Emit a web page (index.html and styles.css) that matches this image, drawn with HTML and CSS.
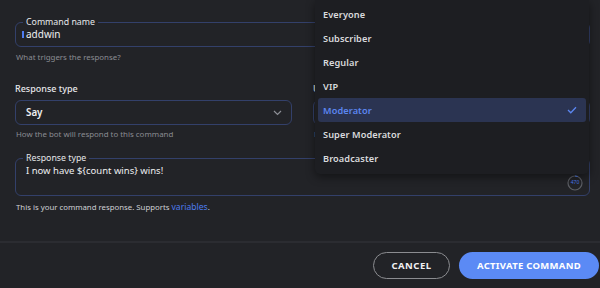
FILE: index.html
```html
<!DOCTYPE html>
<html lang="en">
<head>
    <meta charset="UTF-8">
    <title>Edit command</title>
    <link rel="stylesheet" href="styles.css">
</head>
<body>
    <section class="page">
        <form class="form">
            <fieldset class="outlined name-field">
                <legend>Command name</legend>
                <div class="value"><span class="caret"></span>addwin</div>
            </fieldset>
            <p class="hint">What triggers the response?</p>

            <div class="row">
                <div class="col">
                    <label class="label">Response type</label>
                    <div class="select">
                        <span>Say</span>
                        <svg class="chevron" width="9" height="6" viewBox="0 0 9 6"><path d="M1 1l3.5 3.5L8 1" fill="none" stroke="#8d8f96" stroke-width="1.2"/></svg>
                    </div>
                    <p class="hint">How the bot will respond to this command</p>
                </div>
                <div class="col">
                    <label class="label">User level</label>
                    <div class="select">
                        <span>Moderator</span>
                    </div>
                    <p class="hint">Minimum role needed to use this command</p>
                </div>
            </div>

            <fieldset class="outlined response-field">
                <legend>Response type</legend>
                <div class="ta-body">
                    <div class="value">I now have ${count wins} wins!</div>
                    <div class="counter">
                        <svg width="16" height="16" viewBox="0 0 16 16">
                            <circle cx="8" cy="8" r="7" fill="none" stroke="#5c5e64" stroke-width="1.2"/>
                            <path d="M8 1a7 7 0 0 1 2.6 0.5" fill="none" stroke="#4d7cf0" stroke-width="1.2"/>
                        </svg>
                        <span>470</span>
                    </div>
                </div>
            </fieldset>
            <p class="hint strong">This is your command response. Supports <a href="#" class="link">variables</a>.</p>
        </form>

        <div class="footer">
            <button type="button" class="btn cancel">CANCEL</button>
            <button type="button" class="btn activate">ACTIVATE COMMAND</button>
        </div>

        <ul class="menu">
            <li>Everyone</li>
            <li>Subscriber</li>
            <li>Regular</li>
            <li>VIP</li>
            <li class="selected">Moderator
                <svg width="10" height="8" viewBox="0 0 10 8"><path d="M1 4l2.8 2.8L9 1.2" fill="none" stroke="#5b86f0" stroke-width="1.3"/></svg>
            </li>
            <li>Super Moderator</li>
            <li>Broadcaster</li>
        </ul>
    </section>
</body>
</html>
```

FILE: styles.css
```css
*{
    box-sizing: border-box;
}

body{
    margin: 0;
    background-color: #222327;
    font-family: "Noto Sans", sans-serif;
    color: #e3e4e7;
    overflow: hidden;
}

.page{
    position: relative;
    width: 600px;
    height: 288px;
    display: flex;
    flex-direction: column;
}

.form{
    flex: 1;
    padding: 17px 10px 0 15px;
    margin: 0;
}

.outlined{
    margin: 0;
    border: 1px solid #33406a;
    border-radius: 6px;
    padding: 0 10px;
}

.outlined legend{
    font-size: 8.8px;
    line-height: 10px;
    padding: 0 3px;
    margin-left: -3px;
    color: #e6e7ea;
}

.value{
    font-size: 9.5px;
    line-height: 14px;
    color: #eeeff1;
    display: flex;
    align-items: center;
}

.name-field{
    padding-bottom: 5px;
}

.name-field .value{
    margin-left: -4px;
    font-size: 10px;
}

.caret{
    display: inline-block;
    width: 2px;
    height: 7px;
    background-color: #4d7cf0;
    margin-right: 2px;
}

.hint{
    margin: 5px 0 0 1px;
    font-size: 7.9px;
    line-height: 10px;
    color: #8a8c92;
}

.hint.strong{
    color: #cfd0d4;
    font-size: 7.8px;
    margin-top: 6px;
}

.link{
    color: #4d7cf0;
    text-decoration: none;
    font-size: 8.6px;
}

.row{
    display: grid;
    grid-template-columns: 1fr 1fr;
    gap: 21px;
    margin-top: 21px;
}

.label{
    display: block;
    font-size: 9px;
    line-height: 12px;
    font-weight: 500;
    color: #e6e7ea;
}

.select{
    margin-top: 5px;
    height: 25px;
    border: 1px solid #33406a;
    border-radius: 6px;
    display: flex;
    align-items: center;
    justify-content: space-between;
    padding: 0 9px 0 10px;
    font-size: 9.8px;
    font-weight: 600;
    color: #eeeff1;
}

.col .hint{
    margin-top: 4px;
}

.response-field{
    margin-top: 14px;
    padding: 0 6px 0 10px;
}

.ta-body{
    display: flex;
    justify-content: space-between;
    height: 32px;
    padding: 1px 0 5px;
}

.ta-body .value{
    align-self: flex-start;
    margin-left: 0;
}

.counter{
    align-self: flex-end;
    position: relative;
    width: 16px;
    height: 16px;
}

.counter span{
    position: absolute;
    inset: 0;
    display: flex;
    align-items: center;
    justify-content: center;
    font-size: 5px;
    color: #4d7cf0;
}

.footer{
    height: 47px;
    border-top: 2px solid #2b2c31;
    display: flex;
    justify-content: flex-end;
    align-items: center;
    gap: 9px;
    padding: 0 1px 0 0;
}

.btn{
    height: 27px;
    border-radius: 14px;
    font-family: "Noto Sans", sans-serif;
    font-size: 9.5px;
    font-weight: 700;
    letter-spacing: 0.5px;
    cursor: pointer;
}

.cancel{
    width: 77px;
    background-color: transparent;
    border: 1px solid #8b8c90;
    color: #f0f0f2;
}

.activate{
    width: 140px;
    background-color: #5b8af5;
    border: none;
    color: #ffffff;
    letter-spacing: 0.3px;
}

.menu{
    position: absolute;
    top: 0;
    left: 315px;
    width: 274px;
    margin: 0;
    padding: 2px 2px 4px;
    list-style: none;
    background-color: #1d1e22;
    border-radius: 0 0 5px 5px;
    box-shadow: 0 3px 10px rgba(0,0,0,0.45);
}

.menu li{
    height: 24px;
    margin: 0 1px;
    padding: 0 9px 0 5px;
    display: flex;
    align-items: center;
    justify-content: space-between;
    font-size: 9.2px;
    font-weight: 600;
    letter-spacing: 0.1px;
    color: #d9dadd;
    border-radius: 3px;
}

.menu li.selected{
    background-color: #2b3452;
    color: #5b86f0;
}
```
